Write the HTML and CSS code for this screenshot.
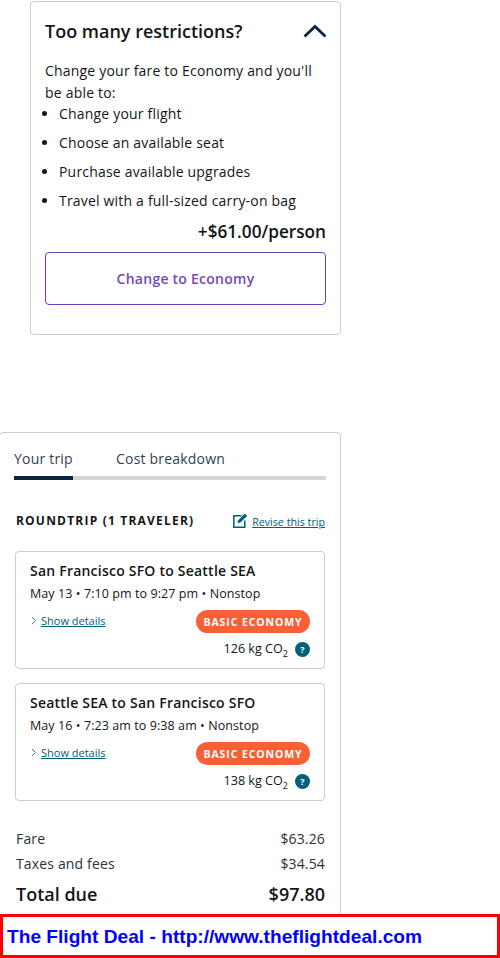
FILE: index.html
```html
<!DOCTYPE html>
<html lang="en">
<head>
<meta charset="utf-8">
<title>The Flight Deal</title>
<link rel="stylesheet" href="styles.css">
</head>
<body>
<section class="card upsell">
  <div class="upsell-head">
    <h2>Too many restrictions?</h2>
    <svg class="chev" width="24" height="14" viewBox="0 0 24 14"><path d="M1.500 12.500 12 2.500l10.500 10" fill="none" stroke="#0c2340" stroke-width="2.800"/></svg>
  </div>
  <p class="intro">Change your fare to Economy and you'll be able to:</p>
  <ul class="perks">
    <li>Change your flight</li>
    <li>Choose an available seat</li>
    <li>Purchase available upgrades</li>
    <li>Travel with a full-sized carry-on bag</li>
  </ul>
  <div class="price">+$61.00/person</div>
  <button class="change">Change to Economy</button>
</section>

<section class="card trip">
  <div class="tabs">
    <div class="tab active">Your trip</div>
    <div class="tab">Cost breakdown</div>
  </div>
  <div class="trip-head">
    <h3>ROUNDTRIP (1 TRAVELER)</h3>
    <a class="revise">
      <svg width="15" height="15" viewBox="0 0 15 15"><path d="M8.500 2.800H.8v11.400h11V7.500" fill="none" stroke="#00607a" stroke-width="1.500"/><path d="M4.500 10.200l.7-2.900L11.800.6l2.300 2.300-6.700 6.700z" fill="#00607a"/></svg>
      <span>Revise this trip</span>
    </a>
  </div>

  <article class="flight">
    <h4>San Francisco SFO to Seattle SEA</h4>
    <p class="times">May 13 • 7:10 pm to 9:27 pm • Nonstop</p>
    <div class="flight-row">
      <a class="details"><svg width="6" height="9" viewBox="0 0 6 9"><path d="M1 1l3.500 3.500L1 8" fill="none" stroke="#3f8397" stroke-width="1"/></svg><span>Show details</span></a>
      <span class="badge">BASIC ECONOMY</span>
    </div>
    <div class="co2"><span>126 kg CO<sub>2</sub></span><i class="help">?</i></div>
  </article>

  <article class="flight">
    <h4>Seattle SEA to San Francisco SFO</h4>
    <p class="times">May 16 • 7:23 am to 9:38 am • Nonstop</p>
    <div class="flight-row">
      <a class="details"><svg width="6" height="9" viewBox="0 0 6 9"><path d="M1 1l3.500 3.500L1 8" fill="none" stroke="#3f8397" stroke-width="1"/></svg><span>Show details</span></a>
      <span class="badge">BASIC ECONOMY</span>
    </div>
    <div class="co2"><span>138 kg CO<sub>2</sub></span><i class="help">?</i></div>
  </article>

  <div class="costs">
    <div class="cost"><span>Fare</span><span>$63.26</span></div>
    <div class="cost"><span>Taxes and fees</span><span>$34.54</span></div>
    <div class="cost total"><span>Total due</span><span>$97.80</span></div>
  </div>
</section>

<div class="banner">The Flight Deal - http://www.theflightdeal.com</div>
</body>
</html>
```

FILE: styles.css
```css
* { box-sizing: border-box; }
html, body { margin: 0; padding: 0; }
body {
  width: 500px;
  height: 958px;
  overflow: hidden;
  position: relative;
  background: #fff;
  font-family: "Open Sans", sans-serif;
  color: #131617;
}
h2, h3, h4, p, ul { margin: 0; padding: 0; }
.card {
  border: 1px solid #cbcdce;
  border-radius: 4px;
  background: #fff;
}
.upsell {
  margin: 1px 0 0 30px;
  width: 311px;
  height: 334px;
  padding: 13px 14px 0;
}
.upsell-head {
  display: flex;
  justify-content: space-between;
  align-items: center;
  height: 32px;
  margin-bottom: 13px;
}
.upsell-head h2 { font-size: 18px; font-weight: 600; line-height: 32px; }
.chev { margin-top: -1px; margin-right: -1px; }
.intro { font-size: 14px; line-height: 21.500px; letter-spacing: 0.200px; padding-right: 8px; }
.perks { list-style: disc; padding-left: 14px; font-size: 14px; letter-spacing: 0.190px; }
.perks li { line-height: 21px; margin-bottom: 8px; }
.price {
  text-align: right;
  font-size: 17.200px;
  font-weight: 600;
  line-height: 22px;
  margin-top: 10px;
}
.change {
  display: block;
  width: 100%;
  height: 53px;
  margin-top: 9px;
  background: #fff;
  border: 1px solid #6b3fb5;
  border-radius: 4px;
  font: 600 14px "Open Sans", sans-serif;
  letter-spacing: 0.250px;
  color: #7548b8;
}
.trip {
  margin: 97px 0 0 -1px;
  width: 342px;
  height: 560px;
  padding: 0 14px;
}
.tabs {
  display: flex;
  gap: 43px;
  border-bottom: 4px solid #d4d5d0;
  height: 47px;
}
.tab {
  font-size: 14px;
  line-height: 20px;
  letter-spacing: 0.200px;
  padding-top: 16px;
  color: #33424f;
  height: 47px;
}
.tab.active { border-bottom: 4px solid #0c2340; width: 59px; white-space: nowrap; }
.trip-head {
  display: flex;
  justify-content: space-between;
  align-items: center;
  margin: 28px 1px 0 0;
  height: 26px;
  padding-left: 2px;
}
.trip-head h3 { font-size: 12px; font-weight: 700; letter-spacing: 1.200px; line-height: 26px; margin-top: 0; }
.revise { display: flex; align-items: center; gap: 4px; font-size: 10.700px; color: #00607a; margin-top: 1px; }
.revise svg { margin-top: -3px; }
.revise span, .details span { text-decoration: underline; }
.flight {
  border: 1px solid #cbcdce;
  border-radius: 4px;
  width: 310px;
  height: 118px;
  margin: 17px 0 0 1px;
  padding: 9px 14px 0 14px;
}
.flight + .flight { margin-top: 14px; }
.flight h4 { font-size: 14px; font-weight: 600; line-height: 20px; letter-spacing: 0.220px; }
.times { font-size: 12.500px; line-height: 18px; margin-top: 4px; letter-spacing: 0.080px; }
.flight-row {
  display: flex;
  justify-content: space-between;
  align-items: center;
  height: 23px;
  margin-top: 7px;
}
.details { display: flex; align-items: center; gap: 4px; font-size: 11px; color: #00607a; margin-top: -2px; margin-left: 1px; }
.badge {
  background: #f96035;
  color: #fff;
  font-size: 10.500px;
  font-weight: 700;
  letter-spacing: 0.900px;
  line-height: 24px;
  height: 23px;
  width: 114px;
  text-align: center;
  border-radius: 12px;
}
.co2 {
  display: flex;
  justify-content: flex-end;
  align-items: center;
  gap: 7px;
  margin-top: 7px;
  font-size: 12.600px;
  line-height: 18px;
}
.co2 sub { font-size: 9px; line-height: 0; }
.help {
  width: 15px;
  height: 15px;
  border-radius: 50%;
  background: #00607a;
  color: #fff;
  font-style: normal;
  font-weight: 700;
  font-size: 9px;
  line-height: 15px;
  text-align: center;
}
.costs { margin: 28px 0 0 1px; width: 310px; padding-left: 1px; }
.cost {
  display: flex;
  justify-content: space-between;
  font-size: 14px;
  letter-spacing: 0.150px;
  line-height: 20px;
  margin-bottom: 5px;
  color: #2b3238;
}
.cost.total {
  font-size: 18px;
  letter-spacing: 0;
  font-weight: 600;
  line-height: 24px;
  margin-top: 8px;
  color: #131617;
}
.banner {
  position: absolute;
  left: 0;
  top: 914px;
  width: 500px;
  height: 44px;
  border: 3px solid #ff0000;
  background: #fff;
  color: #0000ff;
  font-family: "Liberation Sans", Arial, sans-serif;
  font-weight: 700;
  font-size: 19.150px;
  line-height: 40px;
  padding-left: 4px;
}
```
